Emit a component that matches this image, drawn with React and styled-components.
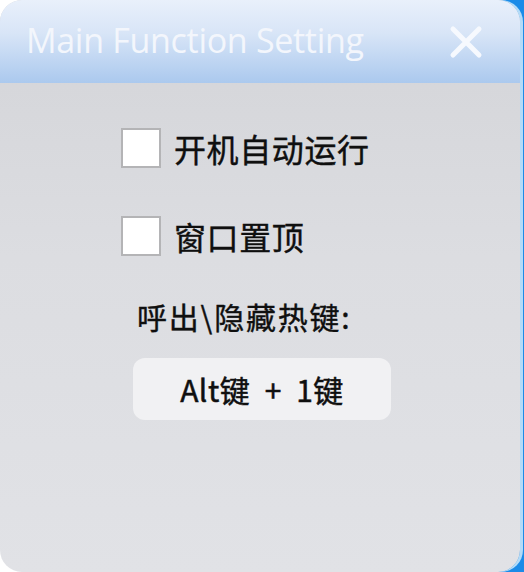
import React from "react";
import styled, { createGlobalStyle } from "styled-components";

const Global = createGlobalStyle`
  html, body { margin: 0; padding: 0; }
  body {
    width: 524px;
    height: 572px;
    overflow: hidden;
    background: linear-gradient(to right, #ffffff 0 50%, #1b8be8 50% 100%);
    font-family: "Noto Sans CJK SC", "Noto Sans", sans-serif;
  }
`;

const Window = styled.div`
  width: 520px;
  height: 572px;
  border-radius: 22px;
  overflow: hidden;
  display: flex;
  flex-direction: column;
  background: linear-gradient(to bottom, #d3d4d8 0%, #dcdde1 45%, #e1e2e6 100%);
  box-shadow: 3px 0 0 #b3dbf8;
`;

const TitleBar = styled.div`
  height: 83px;
  flex: none;
  display: flex;
  align-items: center;
  justify-content: space-between;
  padding: 0 36px 0 26px;
  box-sizing: border-box;
  background: linear-gradient(to bottom, #e9f0fb 0%, #d8e5f7 40%, #abc9ee 100%);
`;

const Title = styled.div`
  font-family: "Open Sans", "Noto Sans", sans-serif;
  font-size: 34px;
  color: #f3f6fc;
  letter-spacing: -0.3px;
  padding-bottom: 4px;
`;

const Close = styled.div`
  width: 36px;
  height: 36px;
  display: flex;
  align-items: center;
  justify-content: center;
`;

const Content = styled.div`
  flex: 1;
  display: flex;
  flex-direction: column;
  align-items: flex-start;
  padding: 45px 0 0 121px;
`;

const CheckRow = styled.label`
  display: flex;
  align-items: center;
  gap: 13px;
  height: 40px;
  margin-bottom: ${(p) => p.$gap}px;
  font-size: 32px;
  letter-spacing: 0.6px;
  color: #0f0f0f;
  -webkit-text-stroke: 0.4px #0f0f0f;
`;

const Box = styled.span`
  width: 36px;
  height: 36px;
  background: #ffffff;
  border: 2px solid #b4b4b6;
  flex: none;
`;

const Label = styled.div`
  margin-left: 16px;
  font-size: 30px;
  letter-spacing: 1.8px;
  color: #0f0f0f;
  -webkit-text-stroke: 0.4px #0f0f0f;
  line-height: 40px;
`;

const HotkeyButton = styled.div`
  margin: 22px 0 0 12px;
  width: 258px;
  height: 62px;
  border-radius: 12px;
  background: #f1f1f3;
  display: flex;
  align-items: center;
  justify-content: center;
  font-size: 30px;
  letter-spacing: 0.5px;
  color: #0f0f0f;
  -webkit-text-stroke: 0.5px #0f0f0f;
  white-space: pre;
`;

export default function App() {
  return (
    <>
      <Global />
      <Window>
        <TitleBar>
          <Title>Main Function Setting</Title>
          <Close>
            <svg width="34" height="34" viewBox="0 0 34 34">
              <path d="M4 4 L30 30 M30 4 L4 30" stroke="#f6f9fe" strokeWidth="5" strokeLinecap="round" />
            </svg>
          </Close>
        </TitleBar>
        <Content>
          <CheckRow $gap={48}>
            <Box />
            开机自动运行
          </CheckRow>
          <CheckRow $gap={40}>
            <Box />
            窗口置顶
          </CheckRow>
          <Label>呼出\隐藏热键:</Label>
          <HotkeyButton>{"Alt键  +  1键"}</HotkeyButton>
        </Content>
      </Window>
    </>
  );
}
